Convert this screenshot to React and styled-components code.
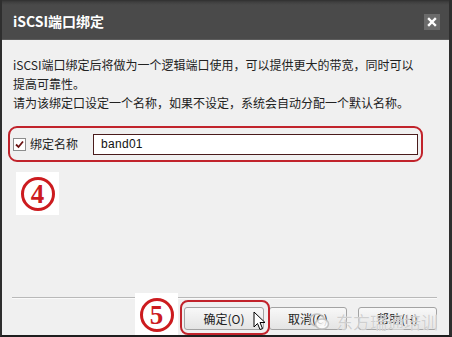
import React from "react";
import styled, { createGlobalStyle } from "styled-components";

const Global = createGlobalStyle`
  html, body { margin: 0; padding: 0; background: #f0f0f0; }
  * { box-sizing: border-box; }
`;

const Dialog = styled.div`
  position: relative;
  width: 452px;
  height: 337px;
  display: flex;
  flex-direction: column;
  background: #f0f0f0;
  border-left: 2px solid #2e2e2e;
  border-right: 3px solid #2e2e2e;
  border-bottom: 2px solid #1e1e1e;
  font-family: "Noto Sans CJK SC", "Liberation Sans", sans-serif;
  overflow: hidden;
`;

const TitleBar = styled.div`
  height: 40px;
  flex: none;
  display: flex;
  align-items: center;
  justify-content: space-between;
  padding: 0 9px 0 11px;
  background: linear-gradient(#2f2f2f 0, #3f3f3f 2px, #4a4a4a 5px, #4a4a4a 100%);
  border-bottom: 1px solid #5c5c5c;
`;

const Title = styled.div`
  color: #fff;
  font-size: 14px;
  font-weight: 700;
  line-height: 16px;
  margin-top: 2px;
`;

const Close = styled.div`
  width: 16px;
  height: 16px;
  background: #6b6b6b;
  color: #fff;
  display: flex;
  align-items: center;
  justify-content: center;
  margin-top: 4px;
`;

const Content = styled.div`
  flex: 1;
  display: flex;
  flex-direction: column;
  padding: 15px 0 0 6px;
`;

const Text = styled.div`
  margin-left: 5px;
  font-size: 12px;
  line-height: 19px;
  color: #222;
  white-space: nowrap;
`;

const Row = styled.div`
  margin-top: 14px;
  width: 415px;
  height: 36px;
  border: 2px solid #c1232b;
  border-radius: 9px;
  display: flex;
  align-items: center;
  padding-left: 3px;
`;

const Check = styled.div`
  width: 13px;
  height: 13px;
  border: 1px solid #8c8c8c;
  background: #fff;
  display: flex;
  align-items: center;
  justify-content: center;
`;

const Label = styled.div`
  width: 63px;
  margin-left: 4px;
  font-size: 12px;
  color: #222;
  line-height: 16px;
`;

const Input = styled.div`
  width: 325px;
  height: 21px;
  border: 1px solid #4a1c1c;
  background: #fff;
  display: flex;
  align-items: center;
  padding-left: 7px;
  font-family: "Liberation Sans", "DejaVu Sans", sans-serif;
  font-size: 12px;
  letter-spacing: 0.3px;
  color: #111;
`;

const Mark = styled.div`
  width: 43px;
  height: 43px;
  background: #fff;
  display: flex;
  align-items: center;
  justify-content: center;
  margin: ${(p) => p.$m || "0"};
`;

const Circle = styled.div`
  width: 34px;
  height: 34px;
  border: 3px solid #cc1b1f;
  border-radius: 50%;
  color: #cc1b1f;
  display: flex;
  align-items: center;
  justify-content: center;
  font-family: "Liberation Serif", "DejaVu Serif", serif;
  font-weight: 700;
  font-size: 27px;
  line-height: 1;
  padding-top: 1px;
`;

const Footer = styled.div`
  flex: none;
  padding: 0 12px 5px 10px;
  display: flex;
  flex-direction: column;
`;

const Separator = styled.div`
  height: 1px;
  background: #b9b9b9;
  box-shadow: 0 1px 0 #fafafa;
  margin-bottom: 9px;
`;

const Buttons = styled.div`
  display: flex;
  justify-content: flex-end;
`;

const Button = styled.div`
  width: ${(p) => p.$w || 79}px;
  height: 23px;
  margin-left: ${(p) => p.$ml || 0}px;
  border: 1px solid #a3a3a3;
  border-radius: 3px;
  background: linear-gradient(#f8f8f8, #e4e4e4);
  display: flex;
  align-items: center;
  justify-content: center;
  font-size: 12px;
  color: #222;
`;

const FiveMark = styled.div`
  position: absolute;
  left: 133px;
  top: 293px;
`;

const Highlight = styled.div`
  position: absolute;
  left: 178px;
  top: 300px;
  width: 90px;
  height: 35px;
  border: 2px solid #c1232b;
  border-radius: 8px;
`;

const Watermark = styled.div`
  position: absolute;
  left: 306px;
  top: 309px;
  display: flex;
  align-items: center;
  gap: 6px;
  color: rgba(200, 200, 200, 0.85);
  font-size: 17px;
  text-shadow: 0 0 1px rgba(255, 255, 255, 0.9);
  pointer-events: none;
`;

const Cursor = styled.svg`
  position: absolute;
  left: 251px;
  top: 311px;
`;

export default function App() {
  return (
    <>
      <Global />
      <Dialog>
        <TitleBar>
          <Title>iSCSI端口绑定</Title>
          <Close>
            <svg width="10" height="10" viewBox="0 0 10 10">
              <path d="M2 2 L8 8 M8 2 L2 8" stroke="#fff" strokeWidth="2.4" strokeLinecap="square" />
            </svg>
          </Close>
        </TitleBar>
        <Content>
          <Text>
            iSCSI端口绑定后将做为一个逻辑端口使用，可以提供更大的带宽，同时可以
            <br />
            提高可靠性。
            <br />
            请为该绑定口设定一个名称，如果不设定，系统会自动分配一个默认名称。
          </Text>
          <Row>
            <Check>
              <svg width="11" height="11" viewBox="0 0 11 11">
                <path d="M2 5.5 L4.5 8 L9 2.5" stroke="#6b1414" strokeWidth="1.8" fill="none" />
              </svg>
            </Check>
            <Label>绑定名称</Label>
            <Input>band01</Input>
          </Row>
          <Mark $m="10px 0 0 8px">
            <Circle>4</Circle>
          </Mark>
        </Content>
        <Footer>
          <Separator />
          <Buttons>
            <Button $w={80}>确定(O)</Button>
            <Button $w={78} $ml={5}>取消(C)</Button>
            <Button $w={79} $ml={11}>帮助(H)</Button>
          </Buttons>
        </Footer>
        <FiveMark>
          <Mark>
            <Circle>5</Circle>
          </Mark>
        </FiveMark>
        <Highlight />
        <Watermark>
          <svg width="22" height="20" viewBox="0 0 22 20">
            <ellipse cx="9" cy="8" rx="7.5" ry="6" fill="none" stroke="rgba(190,190,190,0.9)" strokeWidth="1.6" />
            <ellipse cx="14" cy="12" rx="6.5" ry="5" fill="rgba(255,255,255,0.8)" stroke="rgba(190,190,190,0.9)" strokeWidth="1.6" />
          </svg>
          <span>东方瑞通培训</span>
        </Watermark>
        <Cursor width="13" height="20" viewBox="0 0 13 20">
          <path d="M1 1 L1 16 L4.5 12.5 L7 18.5 L9.5 17.5 L7 11.5 L12 11.5 Z" fill="#fff" stroke="#000" strokeWidth="1" strokeLinejoin="round" />
        </Cursor>
      </Dialog>
    </>
  );
}
